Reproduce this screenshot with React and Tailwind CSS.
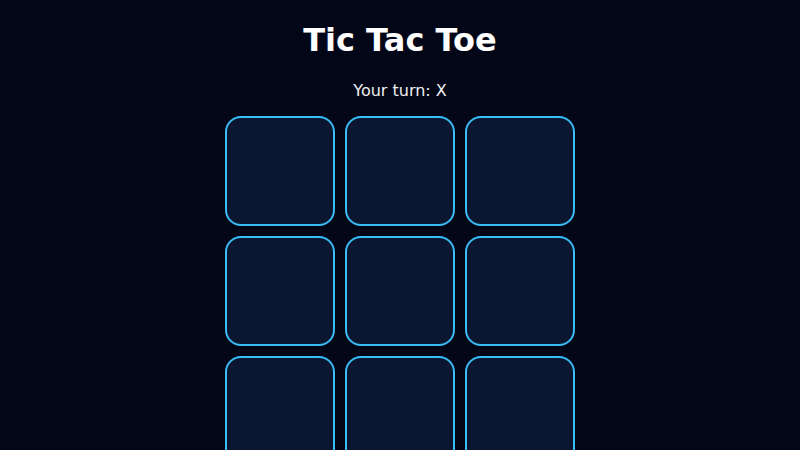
export default function App() {
  const cells = Array.from({ length: 9 });

  return (
    <div
      className="min-h-screen bg-[#030617] flex flex-col items-center pt-4 text-white"
      style={{ fontFamily: '"DejaVu Sans", sans-serif' }}
    >
      <h1 className="text-[32px] leading-[48px] font-bold">Tic Tac Toe</h1>
      <p className="mt-[15px] text-base leading-6 text-[#f1f1f1]">Your turn: X</p>

      {/* Board */}
      <div className="mt-[13px] grid grid-cols-3 gap-[10px]">
        {cells.map((_, i) => (
          <button
            key={i}
            className="w-[110px] h-[110px] rounded-2xl border-2 border-[#38bdf8] bg-[#0b1731]"
          />
        ))}
      </div>
    </div>
  );
}
